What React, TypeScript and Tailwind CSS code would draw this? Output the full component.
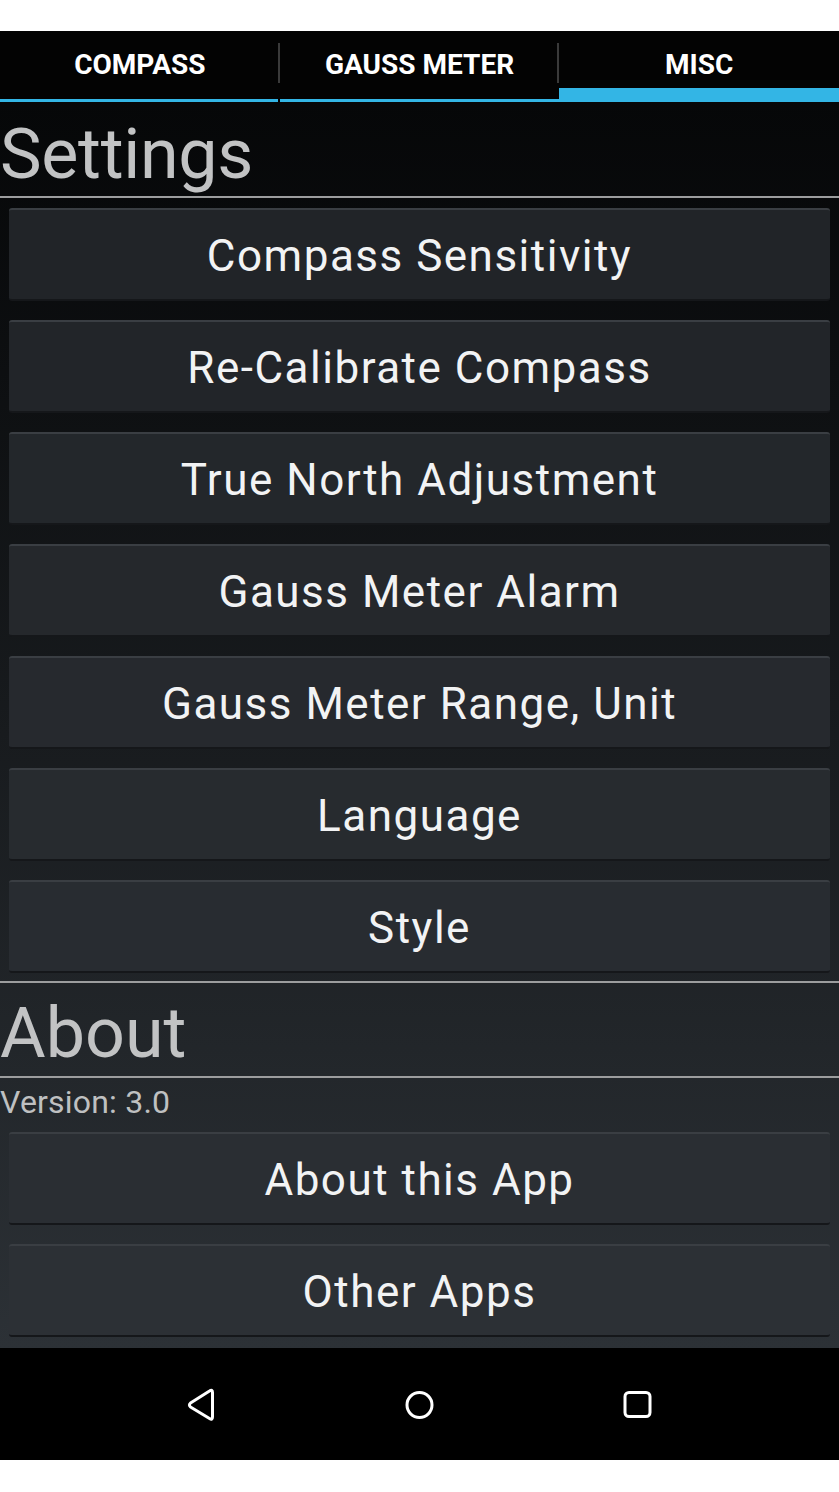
import React from "react";

const settings = [
  { label: "Compass Sensitivity", bg: "bg-[#212428]" },
  { label: "Re-Calibrate Compass", bg: "bg-[#222529]" },
  { label: "True North Adjustment", bg: "bg-[#23272b]" },
  { label: "Gauss Meter Alarm", bg: "bg-[#25282c]" },
  { label: "Gauss Meter Range, Unit", bg: "bg-[#26292e]" },
  { label: "Language", bg: "bg-[#272b2f]" },
  { label: "Style", bg: "bg-[#282c31]" },
];

const about = [
  { label: "About this App", bg: "bg-[#2a2e33]" },
  { label: "Other Apps", bg: "bg-[#2c3035]" },
];

function Btn({ label, bg }: { label: string; bg: string }) {
  return (
    <div
      className={`mx-[9px] h-[93px] ${bg} rounded-[3px] border-t-2 border-t-[#3a3e43] border-b-2 border-b-[#15171a] flex items-center justify-center pt-[2px]`}
    >
      <span className="text-[44px] leading-[44px] tracking-[1.5px] text-[#f2f3f4]">{label}</span>
    </div>
  );
}

export default function App() {
  return (
    <div
      className="relative w-[839px] h-[1492px] bg-white flex flex-col"
      style={{ fontFamily: "Roboto, 'Noto Sans', sans-serif" }}
    >
      <div className="h-[31px] shrink-0" />
      {/* Tab bar */}
      <div className="h-[71px] shrink-0 bg-[#030303] flex">
        <div className="flex-1 relative flex flex-col">
          <div className="flex-1 flex items-center justify-center pb-[1px]">
            <span className="text-white font-bold text-[28px] leading-none">COMPASS</span>
          </div>
          <div className="h-[3px] bg-[#33b5e5] mr-[2px]" />
          <div className="absolute right-0 top-[12px] h-[40px] w-[2px] bg-[#3a3a3a]" />
        </div>
        <div className="flex-1 relative flex flex-col">
          <div className="flex-1 flex items-center justify-center pb-[1px]">
            <span className="text-white font-bold text-[28px] leading-none">GAUSS METER</span>
          </div>
          <div className="h-[3px] bg-[#33b5e5]" />
          <div className="absolute right-0 top-[12px] h-[40px] w-[2px] bg-[#3a3a3a]" />
        </div>
        <div className="flex-1 flex flex-col">
          <div className="h-[57px] flex items-center justify-center pt-[10px]">
            <span className="text-white font-bold text-[28px] leading-none">MISC</span>
          </div>
          <div className="h-[14px] bg-[#33b5e5]" />
        </div>
      </div>

      {/* Content */}
      <div className="h-[1246px] shrink-0 bg-gradient-to-b from-[#060708] to-[#2c3136] flex flex-col">
        <div className="h-[94px] pt-[17px]">
          <div className="text-[70px] leading-[70px] text-[#c2c3c4] tracking-[-0.3px]">Settings</div>
        </div>
        <div className="h-[2px] bg-[#9c9d9e]" />
        <div className="flex flex-col gap-[19px] pt-[10px]">
          {settings.map((s) => (
            <Btn key={s.label} {...s} />
          ))}
        </div>
        <div className="h-[8px]" />
        <div className="h-[2px] bg-[#9c9d9e]" />
        <div className="h-[93px] pt-[15px]">
          <div className="text-[70px] leading-[70px] text-[#c2c3c4]">About</div>
        </div>
        <div className="h-[2px] bg-[#9c9d9e]" />
        <div className="pt-[8px] h-[54px]">
          <div className="text-[32px] leading-[32px] text-[#bfc0c1] tracking-[0.2px]">Version: 3.0</div>
        </div>
        <div className="flex flex-col gap-[19px]">
          {about.map((s) => (
            <Btn key={s.label} {...s} />
          ))}
        </div>
      </div>

      {/* Nav bar */}
      <div className="h-[112px] shrink-0 bg-black flex items-center justify-center">
        <svg
          width="839"
          height="112"
          viewBox="0 0 839 112"
          fill="none"
          stroke="white"
          strokeWidth="3"
          strokeLinejoin="round"
        >
          <path d="M212.5 44.5 Q212.5 41 209.5 43 L190.5 55 Q188.5 57 190.5 59 L209.5 70.5 Q212.5 72.5 212.5 69 Z" />
          <circle cx="419.5" cy="57" r="12.5" />
          <rect x="625" y="44.5" width="25" height="24" rx="4" />
        </svg>
      </div>
      <div className="flex-1" />
    </div>
  );
}
